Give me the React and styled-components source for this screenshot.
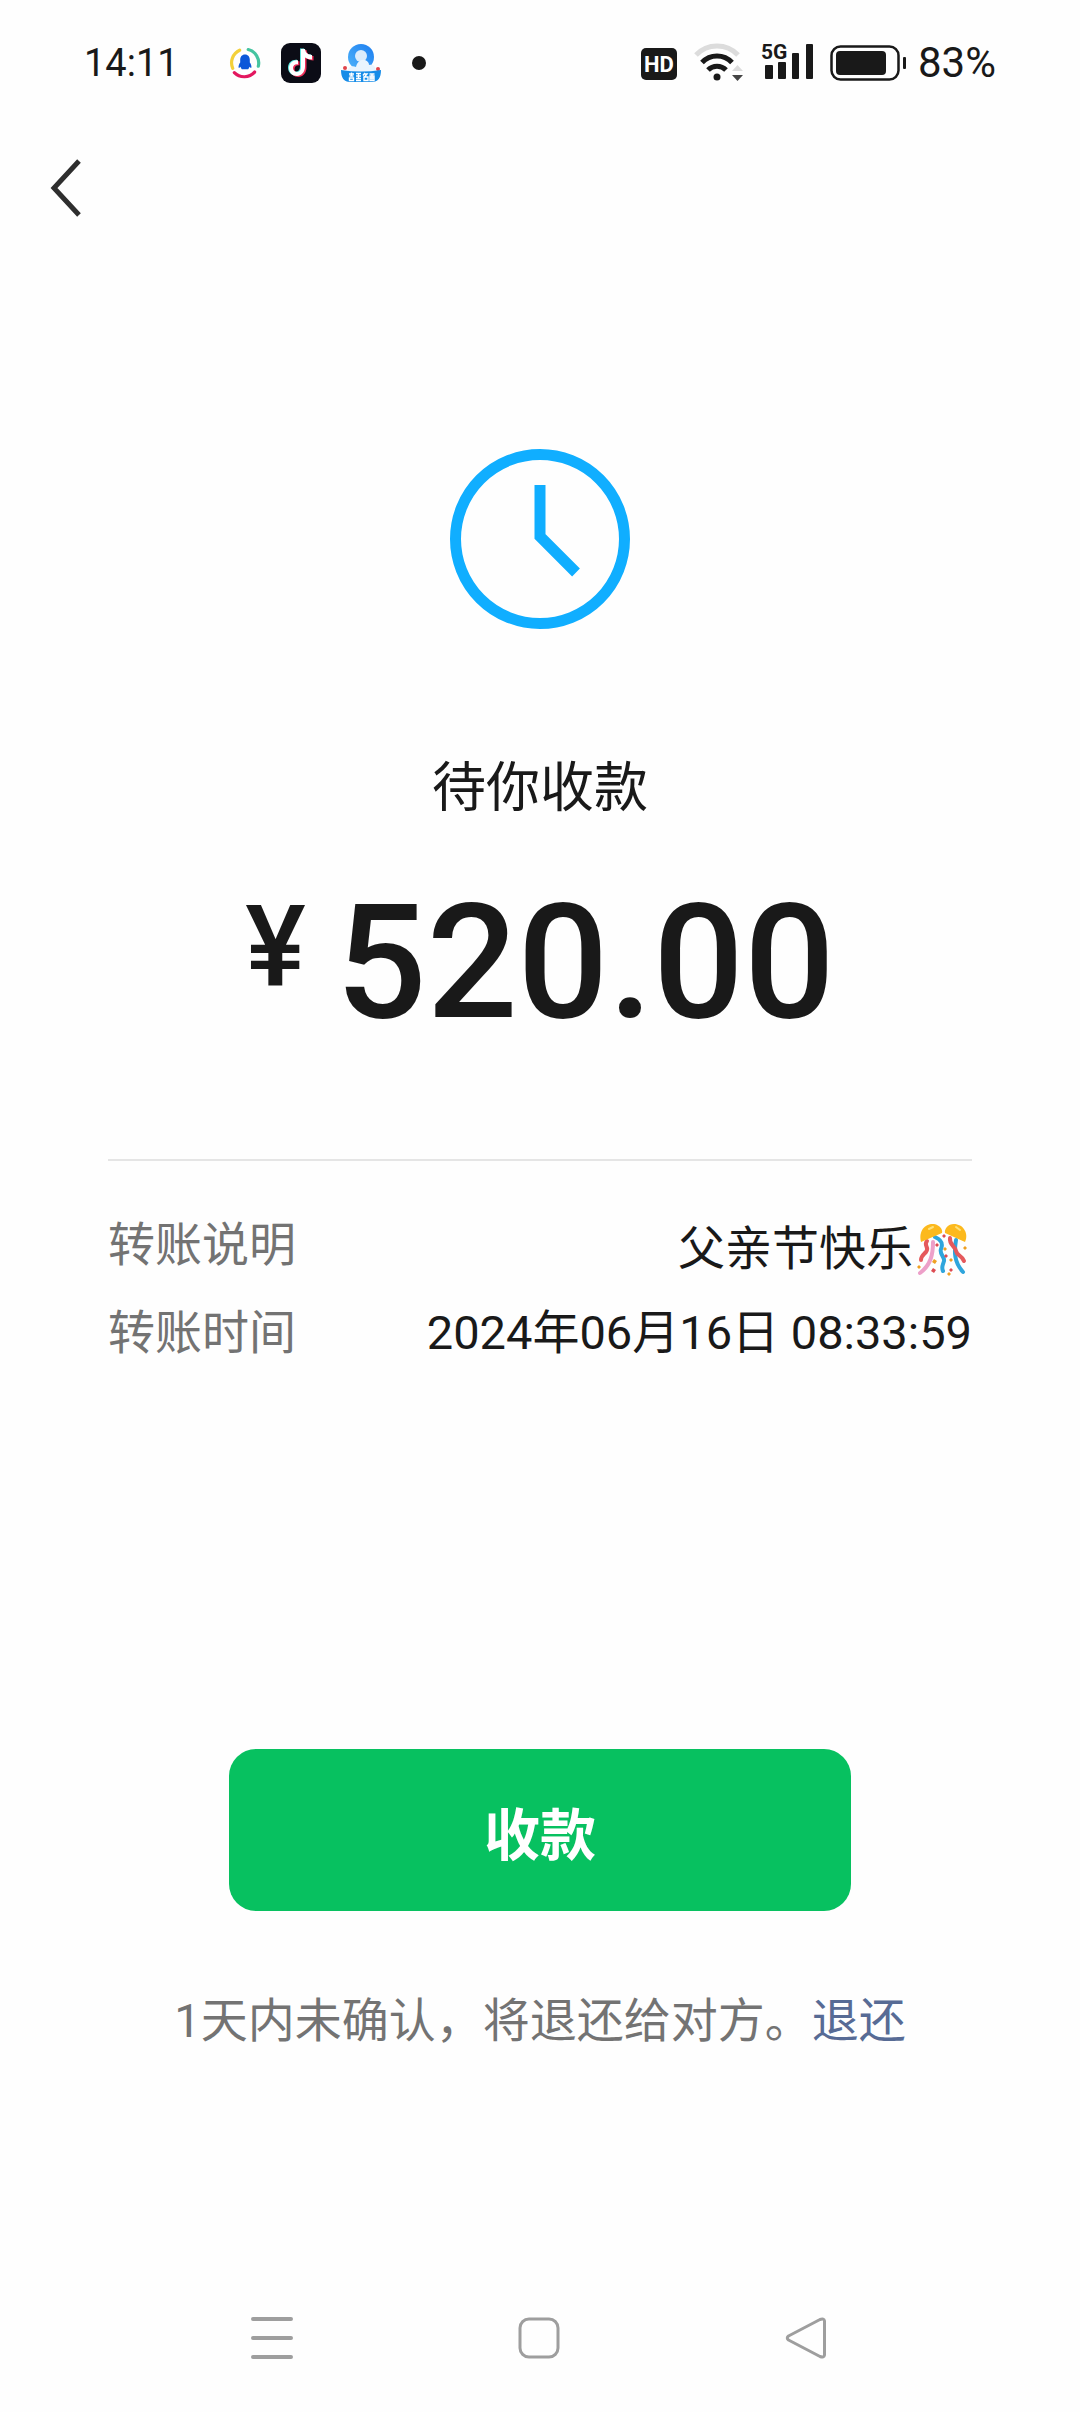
import React from 'react';
import styled, { createGlobalStyle } from 'styled-components';

const colors = {
    ink: '#191919',
    muted: '#737373',
    line: '#e5e5e5',
    blue: '#10aeff',
    green: '#07c160',
    link: '#576b95',
    nav: '#9e9e9e'
}

const GlobalStyle = createGlobalStyle`
    * {
        box-sizing:border-box;
    }
    body {
        margin:0;
        background:#fefefe;
        color:${colors.ink};
        font-family:Roboto, 'Noto Sans CJK SC', sans-serif;
    }
`;

const Page = styled.div`
    display:flex;
    flex-direction:column;
    min-height:100vh;
`;

const StatusBar = styled.header`
    display:flex;
    align-items:center;
    justify-content:space-between;
    height:126px;
    padding:0 84px;
`;

const StatusGroup = styled.div`
    display:flex;
    align-items:center;
    gap:${props => props.$gap}px;
`;

const StatusText = styled.span`
    font-size:${props => props.$size}px;
    line-height:48px;
`;

const AppIcons = styled.div`
    display:flex;
    align-items:center;
    gap:20px;
    padding-left:30px;
`;

const Icon = styled.svg`
    display:block;
    flex:none;
`;

const BackRow = styled.nav`
    display:flex;
    padding:22px 36px 24px;
`;

const IconButton = styled.button`
    display:flex;
    align-items:center;
    justify-content:center;
    min-width:60px;
    height:80px;
    padding:0;
    border:0;
    background:none;
    cursor:pointer;
`;

const Main = styled.main`
    display:flex;
    flex-direction:column;
    align-items:center;
    flex:1;
    padding:197px 108px 0;
`;

const Title = styled.h1`
    margin:120px 0 0;
    font-size:54px;
    font-weight:400;
    line-height:80px;
`;

const Amount = styled.p`
    display:flex;
    align-items:flex-start;
    gap:30px;
    margin:38px 0 0;
    font-size:160px;
    font-weight:500;
    line-height:192px;
`;

const Currency = styled.span`
    font-size:114px;
    line-height:160px;
`;

const Details = styled.dl`
    display:flex;
    flex-direction:column;
    gap:20px;
    align-self:stretch;
    margin:100px 0 0;
    padding-top:50px;
    border-top:2px solid ${colors.line};
`;

const DetailRow = styled.div`
    display:flex;
    justify-content:space-between;
    font-size:47px;
    line-height:68px;
`;

const Label = styled.dt`
    color:${colors.muted};
`;

const Value = styled.dd`
    display:flex;
    align-items:center;
    gap:4px;
    margin:0;
`;

const Remark = styled(Value)`
    padding-top:4px;
    margin-bottom:-4px;
`;

const AcceptButton = styled.button`
    width:72%;
    height:162px;
    margin-top:382px;
    border:0;
    border-radius:27px;
    background:${colors.green};
    color:#fff;
    font-family:inherit;
    font-size:56px;
    font-weight:700;
    cursor:pointer;
`;

const Hint = styled.p`
    margin:76px 0 0;
    color:${colors.muted};
    font-size:47px;
    line-height:68px;
    white-space:nowrap;
`;

const HintLink = styled.a`
    color:${colors.link};
    text-decoration:none;
`;

const SystemNav = styled.nav`
    display:grid;
    grid-template-columns:repeat(3, 1fr);
    padding:0 140px 34px 138px;
`;

const MailIcon = () => (
    <Icon width="32" height="32" viewBox="0 0 30 30" fill="none">
        <g strokeWidth="3" strokeLinecap="round">
            <path d="M3.500 20A13 13 0 0 1 10 3" stroke="#f3d03a" />
            <path d="M18 2.400A13 13 0 0 1 27.500 18" stroke="#45c4a0" />
            <path d="M5 24A13 13 0 0 0 24 23.500" stroke="#e3175f" />
        </g>
        <path d="M15 7c-3 0-4.500 2.300-4.500 5v2.500c-1 1.300-1.800 3-1.500 5 .8.200 1.300-.4 1.700-.9.300 1 .8 1.700 1.300 2.200h6c.5-.5 1-1.200 1.300-2.200.4.500.9 1.100 1.700.9.300-2-.5-3.700-1.500-5V12c0-2.700-1.500-5-4.500-5z" fill="#0b57d9" />
    </Icon>
);

const note = 'M20 6h4c.5 3.600 2.700 5.700 7 6v4.500c-2.600 0-5-.7-7-1.900v9c0 5.600-3.700 9.400-8 9.400-4.700 0-8-3.500-8-8 0-4.800 4-8.300 9-7.700v4.200c-2.800-.6-5 1-5 3.500 0 2.300 1.700 4 4 4 2.500 0 4-1.800 4-4.800z';

const MusicIcon = () => (
    <Icon width="40" height="40" viewBox="0 0 40 40">
        <rect width="40" height="40" rx="9" fill="#0b0c16" />
        <path d={note} fill="#5ce6e0" transform="translate(-1 -.5)" />
        <path d={note} fill="#f0305a" transform="translate(1.500 1)" />
        <path d={note} fill="#fff" />
    </Icon>
);

const BrowserIcon = () => (
    <Icon width="40" height="40" viewBox="0 0 40 40">
        <defs>
            <linearGradient id="ring" x1="1" y1="0" x2="0" y2="1">
                <stop offset="0" stopColor="#1c7df0" />
                <stop offset="1" stopColor="#4fb4fa" />
            </linearGradient>
        </defs>
        <circle cx="20" cy="14" r="13" fill="url(#ring)" />
        <circle cx="20" cy="13" r="6" fill="#dcecfb" />
        <path d="M7 29c-1-5 4-7 8-5 1-5 5-8 9-7 3 1 4 3 4 5 5-1 8 3 6 7z" fill="#eaf5fe" />
        <circle cx="4" cy="25" r="2" fill="#e0444a" />
        <circle cx="37" cy="26" r="2" fill="#e0444a" />
        <path d="M0 27q20 3 40 0c0 8-3 12-9 12H9c-6 0-9-4-9-12z" fill="#168ce8" />
        <g stroke="#fff" strokeWidth="1.400" fill="none">
            <path d="M8 31h5M10.500 29.500v3M8.500 33h4M8.500 35h4v2.500h-4z" />
            <path d="M15 30.500h5M15 33h5M17.500 30v5M15 35.500h5M15 37.500h5" />
            <path d="M24 30l-2 2.500M23 31h3l-3.500 4M23 34h4v3.500h-4z" />
            <path d="M28.500 31h5M29 33h4v4.500h-4zM31 31v6.500M29 35h4" />
        </g>
    </Icon>
);

const HdIcon = () => (
    <Icon width="36" height="34" viewBox="0 0 36 34">
        <rect y="2" width="36" height="32" rx="5" fill={colors.ink} />
        <text x="18" y="26" textAnchor="middle" fill="#fff" fontFamily="Roboto" fontSize="22" fontWeight="700">HD</text>
    </Icon>
);

const WifiIcon = () => (
    <Icon width="50" height="42" viewBox="0 0 50 42" fill="none" strokeWidth="5">
        <path d="M2 13A29 29 0 0 1 44 13" stroke="#dcdcdc" />
        <path d="M8 20.500A20.500 20.500 0 0 1 38 20.500" stroke={colors.ink} />
        <path d="M14 28A12.500 12.500 0 0 1 32 28" stroke={colors.ink} />
        <circle cx="23" cy="35" r="3.500" fill={colors.ink} />
        <path d="M38 29h11l-5.500-6z" fill="#dcdcdc" />
        <path d="M38 33h11l-5.500 6z" fill="#444" />
    </Icon>
);

const SignalIcon = () => (
    <Icon width="52" height="44" viewBox="0 0 52 44" fill={colors.ink}>
        <text x="0" y="18" fontFamily="Roboto" fontSize="21" fontWeight="700">5G</text>
        <rect x="4" y="24" width="8" height="14" rx="1" />
        <rect x="17" y="21" width="8" height="17" rx="1" />
        <rect x="31" y="12" width="7" height="26" rx="1" />
        <rect x="45" y="3" width="7" height="35" rx="1" />
    </Icon>
);

const BatteryIcon = () => (
    <Icon width="76" height="36" viewBox="0 0 76 36">
        <rect x="1.500" y="1.500" width="67" height="33" rx="9" fill="none" stroke={colors.ink} strokeWidth="2.500" />
        <rect x="6" y="6" width="50" height="24" rx="4" fill={colors.ink} />
        <rect x="73" y="12" width="3" height="12" rx="1" fill={colors.ink} />
    </Icon>
);

const ClockIcon = () => (
    <Icon width="180" height="180" viewBox="0 0 180 180" fill="none" stroke={colors.blue} strokeWidth="11">
        <circle cx="90" cy="90" r="84.500" />
        <path d="M90 36v51.500l36 36" />
    </Icon>
);

const ConfettiIcon = () => (
    <Icon width="55" height="55" viewBox="0 0 55 55" fill="none" strokeWidth="4" strokeLinecap="round" role="img" aria-label="🎊">
        <path d="M10 19c-4 5 3 6-1 11-3 3-5 4-5 8" stroke="#e5595c" />
        <path d="M16 20c0 12-2 23-13 31" stroke="#eda0c9" />
        <path d="M18 15c7 3 8 7 6 12s4 8 3 12-3 6-1 10" stroke="#2fa5dc" />
        <path d="M39 18c-2 12-2 22 7 32" stroke="#2fa5dc" />
        <path d="M33 16c-1 7 5 8 6 13s6 4 8 10" stroke="#e5595c" />
        <path d="M4 20C1 8 9 1 17 2c6 1 9 6 8 9z" fill="#fcb91d" />
        <path d="M28 11c-1-4 3-9 9-9 9 0 15 9 11 18z" fill="#fcb91d" />
        <path d="M12 7l4-2M39 5l4 3" stroke="#ffe27a" strokeWidth="2" />
        <path d="M27 12l2 2-2 2-2-2zM20 21l2 2-2 2-2-2zM29 32l2 2-2 2-2-2zM16 46l3 2-2 3-3-2zM34 46l2 2-2 2-2-2z" fill="#dd4b52" />
        <path d="M17 37l3 2-2 3-3-2zM2 43l2 2-2 2-2-2zM48 24l2 2-2 2-2-2zM28 25l2 2-2 2-2-2zM34 36l2 2-2 2-2-2zM32 50l2 2-2 2-2-2z" fill="#efa023" />
    </Icon>
);

const App = () => {
    return (
        <>
            <GlobalStyle />
            <Page>
                <StatusBar>
                    <StatusGroup $gap={20}>
                        <StatusText $size={38}>14:11</StatusText>
                        <AppIcons>
                            <MailIcon />
                            <MusicIcon />
                            <BrowserIcon />
                            <Icon width="60" height="14" viewBox="0 0 60 14">
                                <circle cx="18" cy="7" r="7" fill={colors.ink} />
                            </Icon>
                        </AppIcons>
                    </StatusGroup>
                    <StatusGroup $gap={17}>
                        <HdIcon />
                        <WifiIcon />
                        <SignalIcon />
                        <StatusGroup $gap={12}>
                            <BatteryIcon />
                            <StatusText $size={42}>83%</StatusText>
                        </StatusGroup>
                    </StatusGroup>
                </StatusBar>
                <BackRow>
                    <IconButton type="button" aria-label="返回">
                        <Icon width="32" height="58" viewBox="0 0 32 58" fill="none" stroke="#2e2e2e" strokeWidth="5">
                            <path d="M29 2L4 29l25 27" />
                        </Icon>
                    </IconButton>
                </BackRow>
                <Main>
                    <ClockIcon />
                    <Title>待你收款</Title>
                    <Amount>
                        <Currency>¥</Currency>
                        520.00
                    </Amount>
                    <Details>
                        <DetailRow>
                            <Label>转账说明</Label>
                            <Remark>父亲节快乐<ConfettiIcon /></Remark>
                        </DetailRow>
                        <DetailRow>
                            <Label>转账时间</Label>
                            <Value>2024年06月16日 08:33:59</Value>
                        </DetailRow>
                    </Details>
                    <AcceptButton type="button">收款</AcceptButton>
                    <Hint>
                        1天内未确认，将退还给对方。<HintLink href="#refund">退还</HintLink>
                    </Hint>
                </Main>
                <SystemNav>
                    <IconButton type="button" aria-label="菜单">
                        <Icon width="42" height="42" viewBox="0 0 42 42" stroke={colors.nav} strokeWidth="4" strokeLinecap="round">
                            <path d="M2 2h38M2 21h38M2 40h38" />
                        </Icon>
                    </IconButton>
                    <IconButton type="button" aria-label="主页">
                        <Icon width="42" height="42" viewBox="0 0 42 42" fill="none" stroke={colors.nav} strokeWidth="3">
                            <rect x="2" y="2" width="38" height="38" rx="9" />
                        </Icon>
                    </IconButton>
                    <IconButton type="button" aria-label="后退">
                        <Icon width="42" height="42" viewBox="0 0 42 42" fill="none" stroke={colors.nav} strokeWidth="3" strokeLinejoin="round">
                            <path d="M3.500 19Q1 21 3.500 23L35 39.500Q39 41 39.500 38V4Q39 1 35 2.500z" />
                        </Icon>
                    </IconButton>
                </SystemNav>
            </Page>
        </>
    )
}
export default App;
